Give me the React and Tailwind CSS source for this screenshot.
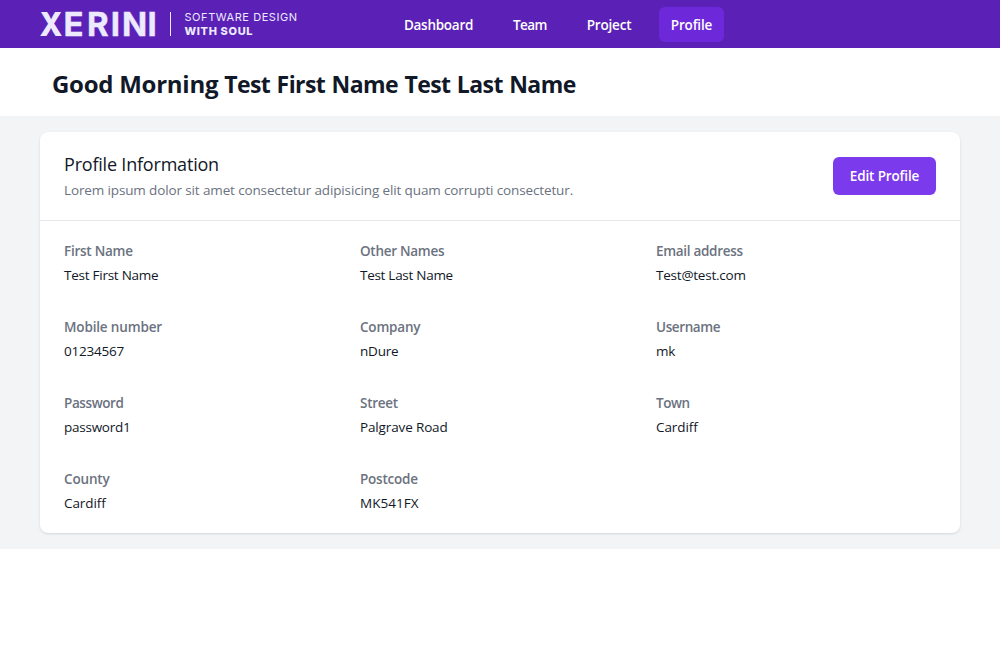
const navigation = [
  { name: 'Dashboard', width: 'w-[93px]', text: 'tracking-[-0.27px]' },
  { name: 'Team', width: 'w-[58px]', text: 'tracking-[-0.55px]' },
  { name: 'Project', width: 'w-[68px]', text: 'tracking-[-0.2px]' },
  { name: 'Profile', width: 'w-[65px]', text: 'tracking-[-0.18px]', current: true },
]

const fields = [
  { label: 'First Name', labelClass: 'tracking-[-0.26px]', value: 'Test First Name', valueClass: 'tracking-[-0.25px]' },
  { label: 'Other Names', labelClass: 'tracking-[-0.28px]', value: 'Test Last Name', valueClass: 'tracking-[-0.28px]' },
  { label: 'Email address', labelClass: 'tracking-[-0.3px]', value: 'Test@test.com', valueClass: 'tracking-[-0.22px]' },
  { label: 'Mobile number', labelClass: 'tracking-[-0.15px]', value: '01234567', valueClass: 'tracking-[-0.22px]' },
  { label: 'Company', labelClass: 'tracking-[-0.2px]', value: 'nDure', valueClass: 'tracking-[-0.2px]' },
  { label: 'Username', labelClass: 'tracking-[-0.39px]', value: 'mk', valueClass: 'tracking-[-0.3px]' },
  { label: 'Password', labelClass: 'tracking-[-0.41px]', value: 'password1', valueClass: 'tracking-[-0.25px]' },
  { label: 'Street', labelClass: 'tracking-[-0.28px]', value: 'Palgrave Road', valueClass: 'tracking-[-0.14px]' },
  { label: 'Town', labelClass: 'tracking-[-0.45px]', value: 'Cardiff', valueClass: 'tracking-[-0.1px]' },
  { label: 'County', labelClass: 'tracking-[-0.15px]', value: 'Cardiff', valueClass: 'tracking-[-0.1px]' },
  { label: 'Postcode', labelClass: 'tracking-[-0.22px]', value: 'MK541FX', valueClass: 'tracking-[0.05px]' },
]

function Logo() {
  return (
    <svg width="260" height="48" viewBox="0 0 260 48" fill="#ede9fe" className="shrink-0" aria-label="Xerini">
      <text x="-0.5" y="36" fontFamily="Inter, sans-serif" fontSize="33" fontWeight="800" textLength="23" lengthAdjust="spacingAndGlyphs">X</text>
      <text x="23.5 47 70.8 82 107.600" y="36" fontFamily="Inter, sans-serif" fontSize="33" fontWeight="700" stroke="#ede9fe" strokeWidth="0.4">ERINI</text>
      <rect x="130" y="12" width="1" height="24" />
      <text x="144.500" y="21" fontFamily="Inter, sans-serif" fontSize="11" textLength="112.500" lengthAdjust="spacing">SOFTWARE DESIGN</text>
      <text x="144.500" y="34.700" fontFamily="Inter, sans-serif" fontSize="11" fontWeight="800" textLength="68" lengthAdjust="spacing">WITH SOUL</text>
    </svg>
  )
}

export default function App() {
  return (
    <div className="min-h-screen bg-white font-['Open_Sans','Noto_Sans',sans-serif] text-[13.5px]">
      <nav className="flex h-12 items-center bg-[#5b21b6] pl-10">
        <Logo />
        <div className="ml-[92px] flex gap-4 pt-px">
          {navigation.map((item) => (
            <a
              key={item.name}
              href="#"
              className={`flex h-[35px] items-center justify-center whitespace-nowrap rounded-md pt-px font-semibold text-white ${item.width} ${item.text} ${item.current ? 'bg-[#6d28d9]' : ''}`}
            >
              {item.name}
            </a>
          ))}
        </div>
      </nav>

      <header className="flex h-[68px] items-center bg-white px-[52px] pb-px pt-1">
        <h1 className="whitespace-nowrap text-2xl font-bold tracking-[-0.26px] text-[#111827]">
          Good Morning{' '}
          <span className="text-[23px] tracking-[-0.58px] [word-spacing:1px]">Test First Name Test Last Name</span>
        </h1>
      </header>

      <main className="bg-[#f3f4f6] px-10 py-4">
        <section className="rounded-lg bg-white shadow-sm">
          <div className="flex items-center justify-between px-6 py-5">
            <div>
              <h2 className="text-lg font-medium leading-6 tracking-[-0.2px] text-[#111827]">Profile Information</h2>
              <p className="mt-1 leading-5 tracking-[-0.13px] text-[#6b7280]">
                Lorem ipsum dolor sit amet consectetur adipisicing elit quam corrupti consectetur.
              </p>
            </div>
            <button className="h-[38px] w-[103px] whitespace-nowrap rounded-md bg-[#7c3aed] font-semibold tracking-[-0.15px] text-white">
              Edit Profile
            </button>
          </div>
          <dl className="grid grid-cols-3 gap-x-4 gap-y-8 border-t border-[#e5e7eb] px-6 py-5">
            {fields.map((field) => (
              <div key={field.label}>
                <dt className={`leading-5 font-semibold text-[#6b7280] ${field.labelClass}`}>{field.label}</dt>
                <dd className={`mt-1 leading-5 text-[#111827] ${field.valueClass}`}>{field.value}</dd>
              </div>
            ))}
          </dl>
        </section>
      </main>
    </div>
  )
}
